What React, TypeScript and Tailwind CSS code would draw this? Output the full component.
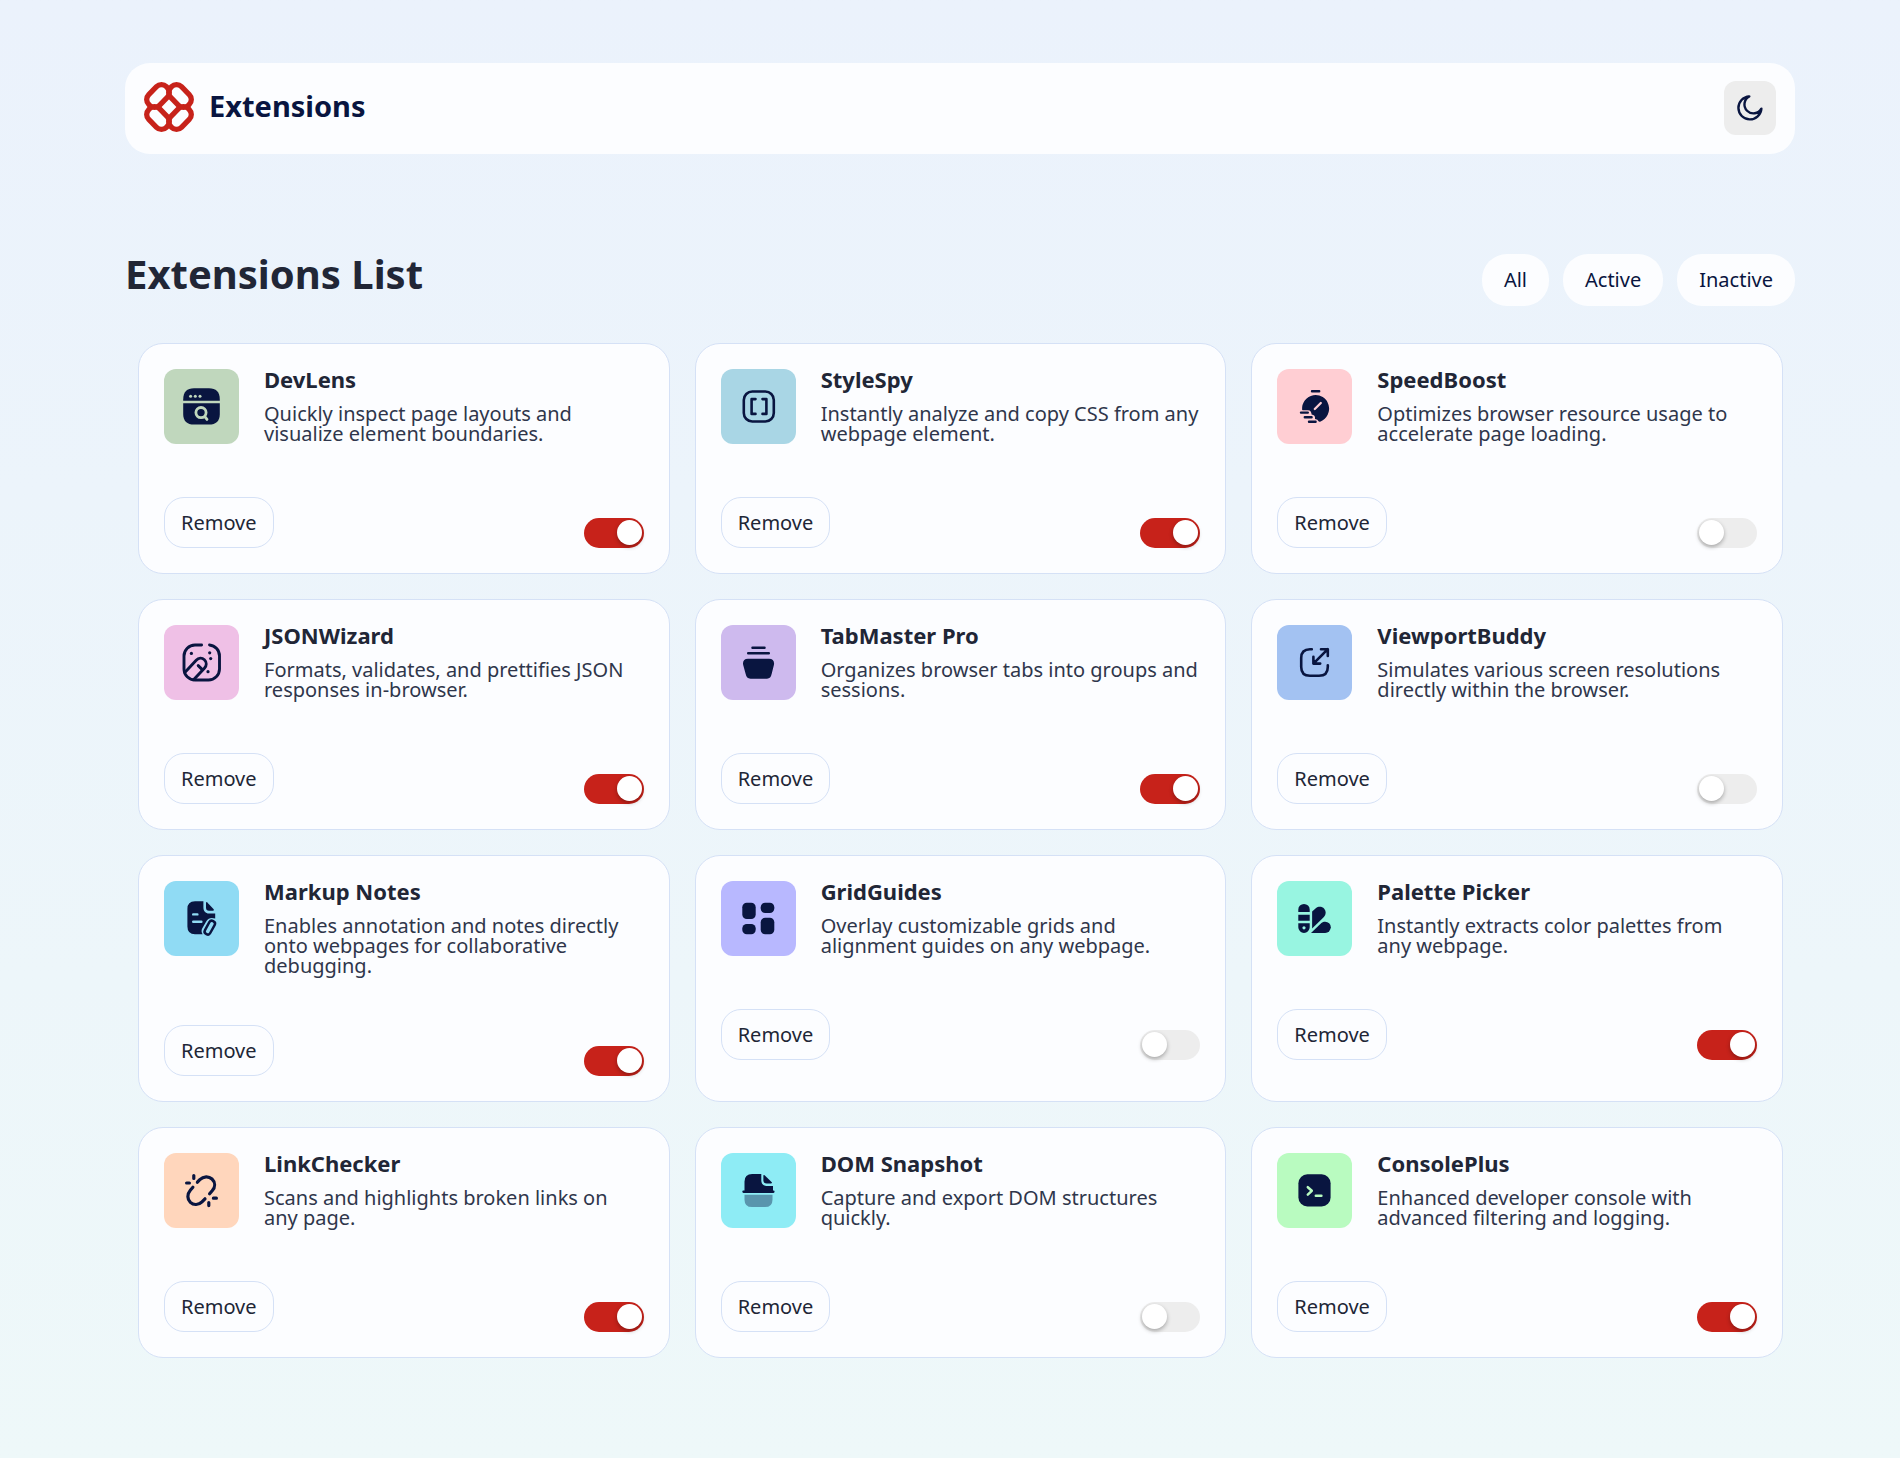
import { useState, type ReactNode } from "react";

const NAVY = "#091540";

type Extension = {
  name: string;
  description: string;
  color: string;
  active: boolean;
  icon: (tile: string) => ReactNode;
};

const line = {
  fill: "none",
  stroke: NAVY,
  strokeLinecap: "round" as const,
  strokeLinejoin: "round" as const,
};

const initialExtensions: Extension[] = [
  {
    name: "DevLens",
    description: "Quickly inspect page layouts and visualize element boundaries.",
    color: "#C0D7BD",
    active: true,
    icon: (tile) => (
      <>
        <path fill={NAVY} d="M19.2 31.7V30.5C19.2 23 23 19.3 30 19.3H45C52 19.3 55.8 23 55.8 30.5V31.7Z" />
        <path fill={NAVY} d="M19.2 34.2H55.8V45C55.8 52 52 55.6 45 55.6H30C23 55.6 19.2 52 19.2 45Z" />
        <g fill={tile}>
          <circle cx="26.6" cy="27.3" r="1.5" />
          <circle cx="31.3" cy="27.3" r="1.5" />
          <circle cx="36" cy="27.3" r="1.5" />
        </g>
        <g fill="none" stroke={tile} strokeWidth="2.8" strokeLinecap="round">
          <circle cx="37" cy="43.6" r="5.1" />
          <path d="M41 47.8 43 50.4" />
        </g>
      </>
    ),
  },
  {
    name: "StyleSpy",
    description: "Instantly analyze and copy CSS from any webpage element.",
    color: "#A9D6E5",
    active: true,
    icon: () => (
      <g {...line} strokeWidth="2.6">
        <rect x="22.8" y="22.5" width="30" height="30" rx="8.5" />
        <path d="M34.5 30.1H30.6V44.9H34.5M41.5 30.1H45.4V44.9H41.5" />
      </g>
    ),
  },
  {
    name: "SpeedBoost",
    description: "Optimizes browser resource usage to accelerate page loading.",
    color: "#FFCED3",
    active: false,
    icon: (tile) => (
      <>
        <path
          fill={NAVY}
          d="M25.1 40.6A13.5 13.7 0 1 1 43.6 52.4C42.4 53 41.4 52.7 40.9 51.6C40.4 50.4 39.2 50.2 38 50C38.6 47.4 37 45.8 34.6 45.6C34.6 43 33.4 41.3 31 41.2H25.8Q25.1 41.2 25.1 40.6Z"
        />
        <path d="M37.8 40 43.8 34" fill="none" stroke={tile} strokeWidth="2.3" strokeLinecap="round" />
        <g {...line} strokeWidth="2.4">
          <path d="M35 22.3H42.2M24 43.6H30.8M27.8 48.2H34.6M32 52.8H38.6" />
        </g>
      </>
    ),
  },
  {
    name: "JSONWizard",
    description: "Formats, validates, and prettifies JSON responses in-browser.",
    color: "#EFC0E6",
    active: true,
    icon: () => (
      <>
        <g {...line} strokeWidth="2.9">
          <path d="M37.6 20H31A11 11 0 0 0 20 31V44A11 11 0 0 0 31 55H44.5A11 11 0 0 0 55.5 44V31A11 11 0 0 0 45.5 20" />
          <path d="M20.8 47.4 32.2 35.2C34.6 32.7 38 32.6 40.4 34.8C42.8 37.1 42.8 40.6 40.4 43.2L29.8 54.6" />
          <path d="M34.2 40.6 38.3 44.6" />
        </g>
        <g fill={NAVY}>
          <circle cx="27.4" cy="28.4" r="1.6" />
          <circle cx="45.7" cy="27.8" r="1.6" />
          <circle cx="46.7" cy="33.6" r="1.6" />
          <circle cx="44" cy="46.7" r="1.6" />
        </g>
      </>
    ),
  },
  {
    name: "TabMaster Pro",
    description: "Organizes browser tabs into groups and sessions.",
    color: "#CEBAEE",
    active: true,
    icon: () => (
      <>
        <path {...line} strokeWidth="2.5" d="M31.5 22.7H43.5M27.2 28.3H47.8" />
        <path
          fill={NAVY}
          d="M27 33.8H48C52 33.8 53.7 36.5 52.9 40L50.7 48.8C49.9 52.2 48.8 53.7 46 53.7H29.5C26.6 53.7 25.4 52.2 24.6 48.8L22.2 40C21.4 36.5 23 33.8 27 33.8Z"
        />
      </>
    ),
  },
  {
    name: "ViewportBuddy",
    description: "Simulates various screen resolutions directly within the browser.",
    color: "#A3C2F2",
    active: false,
    icon: () => (
      <path
        {...line}
        strokeWidth="2.6"
        d="M34.8 24.2H33Q24.2 24.2 24.2 33V42Q24.2 50.8 33 50.8H42Q50.8 50.8 50.8 42V40.2M36.4 38.6 50.8 24.2M36.4 31.8V38.6H43.2M44 24.2H50.8V31"
      />
    ),
  },
  {
    name: "Markup Notes",
    description: "Enables annotation and notes directly onto webpages for collaborative debugging.",
    color: "#90DBF4",
    active: true,
    icon: (tile) => (
      <>
        <path
          fill={NAVY}
          d="M31 20.3H39.4V26.4C39.4 30 41.6 32.4 45 32.4H51.2V37.6C47.4 36.2 44.4 37 42.5 40L38.3 47.2C37.2 49.2 37.4 51.4 38.6 53.2H31Q23.4 53.2 23.4 45.5V28Q23.4 20.3 31 20.3Z"
        />
        <path fill={NAVY} d="M42 22.1Q42 20.4 43.3 21.6L49.7 28.3Q50.5 29.6 49 29.8H45Q42 29.8 42 26.6Z" />
        <path d="M29.2 33.4H33.4M29.2 40.8H37.4" fill="none" stroke={tile} strokeWidth="2.4" strokeLinecap="round" />
        <rect
          x="42.8"
          y="39.3"
          width="6"
          height="14.6"
          rx="2.8"
          transform="rotate(29 45.8 46.6)"
          fill="none"
          stroke={NAVY}
          strokeWidth="2.5"
        />
      </>
    ),
  },
  {
    name: "GridGuides",
    description: "Overlay customizable grids and alignment guides on any webpage.",
    color: "#B8B8FF",
    active: false,
    icon: () => (
      <g fill={NAVY}>
        <rect x="21.3" y="21.7" width="13.4" height="16.4" rx="4.5" />
        <rect x="39.7" y="21.7" width="13.6" height="10.4" rx="4.5" />
        <rect x="21.3" y="42.9" width="13.4" height="10.4" rx="4.5" />
        <rect x="39.7" y="36.8" width="13.6" height="16.5" rx="4.5" />
      </g>
    ),
  },
  {
    name: "Palette Picker",
    description: "Instantly extracts color palettes from any webpage.",
    color: "#98F5E1",
    active: true,
    icon: (tile) => (
      <>
        <g fill={NAVY}>
          <path d="M21.3 31V28.6A5.7 5.7 0 0 1 32.7 28.6V31ZM21.3 33.7H32.7V39.7H21.3ZM21.3 42.3H32.7V46.2A5.7 5.7 0 0 1 21.3 46.2Z" />
          <path d="M35.1 30.6 38.8 27.3C41.4 25.2 45 25.4 47.2 27.8C49.3 30.2 49.2 33.6 46.9 35.9L35.1 47.4Z" />
          <path d="M34 51.9 44.4 42C45.6 40.9 46.6 40.7 48.2 40.7A5.6 5.6 0 0 1 48.2 51.9Z" />
        </g>
        <circle cx="27" cy="46.8" r="1.6" fill={tile} />
      </>
    ),
  },
  {
    name: "LinkChecker",
    description: "Scans and highlights broken links on any page.",
    color: "#FFD6BC",
    active: true,
    icon: () => (
      <g {...line} strokeWidth="3.2">
        <path d="M33.4 29.2 35.8 26.6C39.6 22.9 44.8 23 48 26C51.3 29.2 51.5 34 48.2 37.8L45.6 40.8M28.9 34.2 26.3 37.2C22.9 41.2 23.2 46.2 26.4 49.4C29.6 52.4 34.6 52.2 38 48.8L41 45.8" />
        <path d="M29.8 22.6V25.4M22.6 30H25.4M49.4 45.2H52.4M44.8 49.6V52.6" />
      </g>
    ),
  },
  {
    name: "DOM Snapshot",
    description: "Capture and export DOM structures quickly.",
    color: "#8EECF5",
    active: false,
    icon: () => (
      <>
        <path
          fill={NAVY}
          d="M31.2 21H40.3V27.5C40.3 30.8 42.4 33 45.6 33H52V37.4H52.4Q53.6 37.4 53.6 38.6T52.4 39.9H22.5Q21.3 39.9 21.3 38.6T22.5 37.4H23.5V28.6Q23.5 21 31.2 21Z"
        />
        <path fill={NAVY} d="M42.4 22.8Q42.4 21.3 43.6 22.3L50.8 29.3Q51.6 30.4 50 30.5H45.8Q42.4 30.5 42.4 27.3Z" />
        <path fill={NAVY} opacity="0.4" d="M23.5 41.8H51.5V46.4Q51.5 54 44 54H31Q23.5 54 23.5 46.4Z" />
      </>
    ),
  },
  {
    name: "ConsolePlus",
    description: "Enhanced developer console with advanced filtering and logging.",
    color: "#B9FBC0",
    active: true,
    icon: (tile) => (
      <>
        <rect x="21.4" y="21.3" width="32.2" height="32.2" rx="9" fill={NAVY} />
        <path
          d="M30.8 34.2 34.8 37.8 30.8 41.6M38.8 42.7H44.4"
          fill="none"
          stroke={tile}
          strokeWidth="2.5"
          strokeLinecap="round"
          strokeLinejoin="round"
        />
      </>
    ),
  },
];

function LogoMark() {
  return (
    <svg className="size-[50px]" viewBox="0 0 50 50" fill="none" stroke="#C7221A" strokeWidth="5.3" aria-hidden="true">
      <rect x="1.5" y="6.4" width="25" height="15.2" rx="7" transform="rotate(-45 14 14)" />
      <rect x="23.5" y="6.4" width="25" height="15.2" rx="7" transform="rotate(45 36 14)" />
      <rect x="1.5" y="28.4" width="25" height="15.2" rx="7" transform="rotate(45 14 36)" />
      <rect x="23.5" y="28.4" width="25" height="15.2" rx="7" transform="rotate(-45 36 36)" />
    </svg>
  );
}

function MoonIcon() {
  return (
    <svg
      className="size-[26px]"
      viewBox="0 0 26 26"
      fill="none"
      stroke={NAVY}
      strokeWidth="2.4"
      strokeLinecap="round"
      strokeLinejoin="round"
      aria-hidden="true"
    >
      <path d="M12.3 1.4A11.5 11.5 0 1 0 24.4 13.6A9 9 0 1 1 12.3 1.4Z" />
    </svg>
  );
}

function Card({ ext, onToggle, onRemove }: { ext: Extension; onToggle: () => void; onRemove: () => void }) {
  return (
    <article className="rounded-[25px] border border-[#D5E1F6] bg-[#FCFDFF] p-[25px]">
      <div className="flex min-h-[79px] items-start gap-[25px]">
        <svg className="size-[75px] shrink-0 rounded-xl" viewBox="0 0 75 75" style={{ backgroundColor: ext.color }} aria-hidden="true">
          {ext.icon(ext.color)}
        </svg>
        <div>
          <h2 className="mb-[15px] text-[22px] leading-5 font-bold text-[#212636]">{ext.name}</h2>
          <p className="text-[20px] leading-5 text-[#2F364B]">{ext.description}</p>
        </div>
      </div>
      <div className="mt-[49px] flex items-end justify-between">
        <button
          type="button"
          onClick={onRemove}
          className="h-[51px] rounded-[20px] border border-[#D5E1F6] px-4 text-[20px] text-[#212636]"
        >
          Remove
        </button>
        <label className="relative block h-[30px] w-[60px] cursor-pointer">
          <input
            type="checkbox"
            className="peer sr-only"
            checked={ext.active}
            onChange={onToggle}
            aria-label={`Enable ${ext.name}`}
          />
          <span className="block h-full rounded-full bg-[#EDEDED] peer-checked:bg-[#C7221A]" />
          <span className="absolute top-[2px] left-[2px] size-[25px] rounded-full bg-white shadow-[0_2px_4px_rgba(0,0,0,0.3)] peer-checked:left-[33px]" />
        </label>
      </div>
    </article>
  );
}

export default function App() {
  const [extensions, setExtensions] = useState(initialExtensions);
  const [filter, setFilter] = useState("All");

  const visible = extensions.filter((e) => filter === "All" || e.active === (filter === "Active"));

  return (
    <div className="min-h-screen bg-linear-to-b from-[#EBF2FC] to-[#EEF8F9] pt-[63px] pr-[105px] pb-[100px] pl-[125px] font-['Noto_Sans',sans-serif]">
      <header className="flex items-start justify-between rounded-[25px] bg-[#FCFDFF] px-[19px] pt-[18px] pb-[19px]">
        <div className="flex h-[52px] items-center gap-[15px]">
          <LogoMark />
          <span className="pb-[2px] text-[29px] leading-10 font-bold text-[#091540]">Extensions</span>
        </div>
        <button
          type="button"
          aria-label="Switch to dark theme"
          className="flex h-[54px] w-[52px] items-center justify-center rounded-xl bg-[#EDEDED]"
        >
          <MoonIcon />
        </button>
      </header>

      <main className="mt-[100px]">
        <div className="flex items-start justify-between">
          <h1 className="text-[40px] leading-10 font-bold text-[#212636]">Extensions List</h1>
          <div className="flex gap-[14px]">
            {["All", "Active", "Inactive"].map((name) => (
              <button
                key={name}
                type="button"
                aria-pressed={filter === name}
                onClick={() => setFilter(name)}
                className="h-[52px] rounded-[25px] bg-[#FCFDFF] px-[22px] text-[20px] text-[#091540]"
              >
                {name}
              </button>
            ))}
          </div>
        </div>

        <div className="mt-[37px] grid grid-cols-3 gap-[25px] pr-3 pl-[13px]">
          {visible.map((ext) => (
            <Card
              key={ext.name}
              ext={ext}
              onToggle={() =>
                setExtensions((all) => all.map((e) => (e.name === ext.name ? { ...e, active: !e.active } : e)))
              }
              onRemove={() => setExtensions((all) => all.filter((e) => e.name !== ext.name))}
            />
          ))}
        </div>
      </main>
    </div>
  );
}
